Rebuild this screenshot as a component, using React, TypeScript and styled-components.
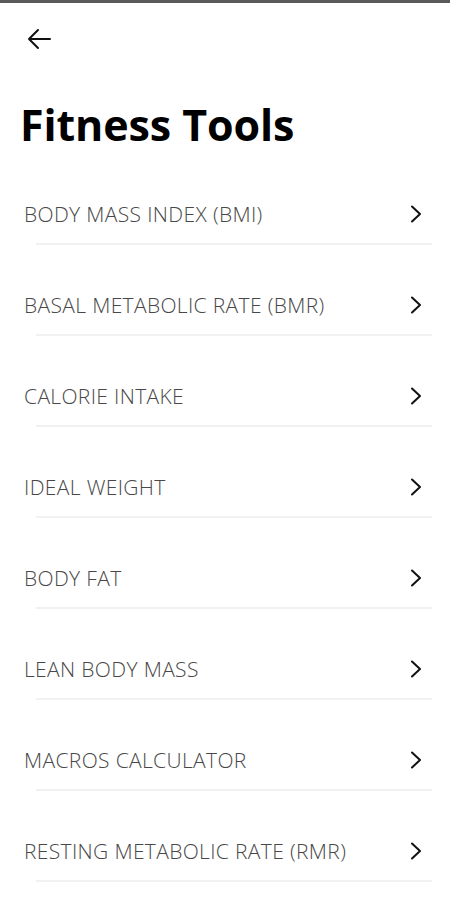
import React from 'react';
import styled, { createGlobalStyle } from 'styled-components';

const GlobalStyle = createGlobalStyle`
  html, body {
    margin: 0;
    padding: 0;
    background: #ffffff;
  }

  body {
    font-family: 'Open Sans', 'Noto Sans', sans-serif;
  }
`;

const Screen = styled.div`
  width: 450px;
  height: 900px;
  box-sizing: border-box;
  border-top: 3px solid #5a5a5a;
  overflow: hidden;
`;

const TopBar = styled.div`
  height: 72px;
  display: flex;
  align-items: center;
  padding-left: 24px;
  box-sizing: border-box;
`;

const BackButton = styled.button`
  background: none;
  border: none;
  padding: 0;
  width: 30px;
  height: 30px;
  display: flex;
  align-items: center;
  justify-content: center;
  cursor: pointer;
`;

const Title = styled.h1`
  margin: 22px 0 0 20px;
  font-weight: 700;
  font-size: 43px;
  line-height: 56px;
  color: #000000;
  letter-spacing: -0.1px;
`;

const List = styled.div`
  display: flex;
  flex-direction: column;
  margin-top: 31px;
`;

const Row = styled.div`
  height: 91px;
  flex-shrink: 0;
  display: flex;
  flex-direction: column;
`;

const RowBody = styled.div`
  height: 59px;
  display: flex;
  align-items: center;
  justify-content: space-between;
  padding: 0 26px 0 24px;
`;

const Label = styled.span`
  font-weight: 300;
  font-size: 21px;
  letter-spacing: 0.35px;
  color: #484848;
  text-transform: uppercase;
`;

const Divider = styled.div`
  margin: 0 18px 0 36px;
  height: 2px;
  background: #f1f1f1;
`;

const items = [
  'Body Mass Index (BMI)',
  'Basal Metabolic Rate (BMR)',
  'Calorie Intake',
  'Ideal Weight',
  'Body Fat',
  'Lean Body Mass',
  'Macros Calculator',
  'Resting Metabolic Rate (RMR)',
];

const Chevron = () => (
  <svg width="16" height="20" viewBox="0 0 16 20">
    <path d="M4 2.5l8 7.5-8 7.5" fill="none" stroke="#111" strokeWidth="2" strokeLinecap="round" strokeLinejoin="round" />
  </svg>
);

const FitnessTools = () => {
  return (
    <Screen>
      <GlobalStyle />
      <TopBar>
        <BackButton aria-label="back">
          <svg width="26" height="24" viewBox="0 0 26 24">
            <path d="M24 12H3M12 3l-9 9 9 9" fill="none" stroke="#111" strokeWidth="2" strokeLinecap="round" strokeLinejoin="round" />
          </svg>
        </BackButton>
      </TopBar>
      <Title>Fitness Tools</Title>
      <List>
        {items.map((item) => (
          <Row key={item}>
            <RowBody>
              <Label>{item}</Label>
              <Chevron />
            </RowBody>
            <Divider />
          </Row>
        ))}
      </List>
    </Screen>
  );
};

export default FitnessTools;
